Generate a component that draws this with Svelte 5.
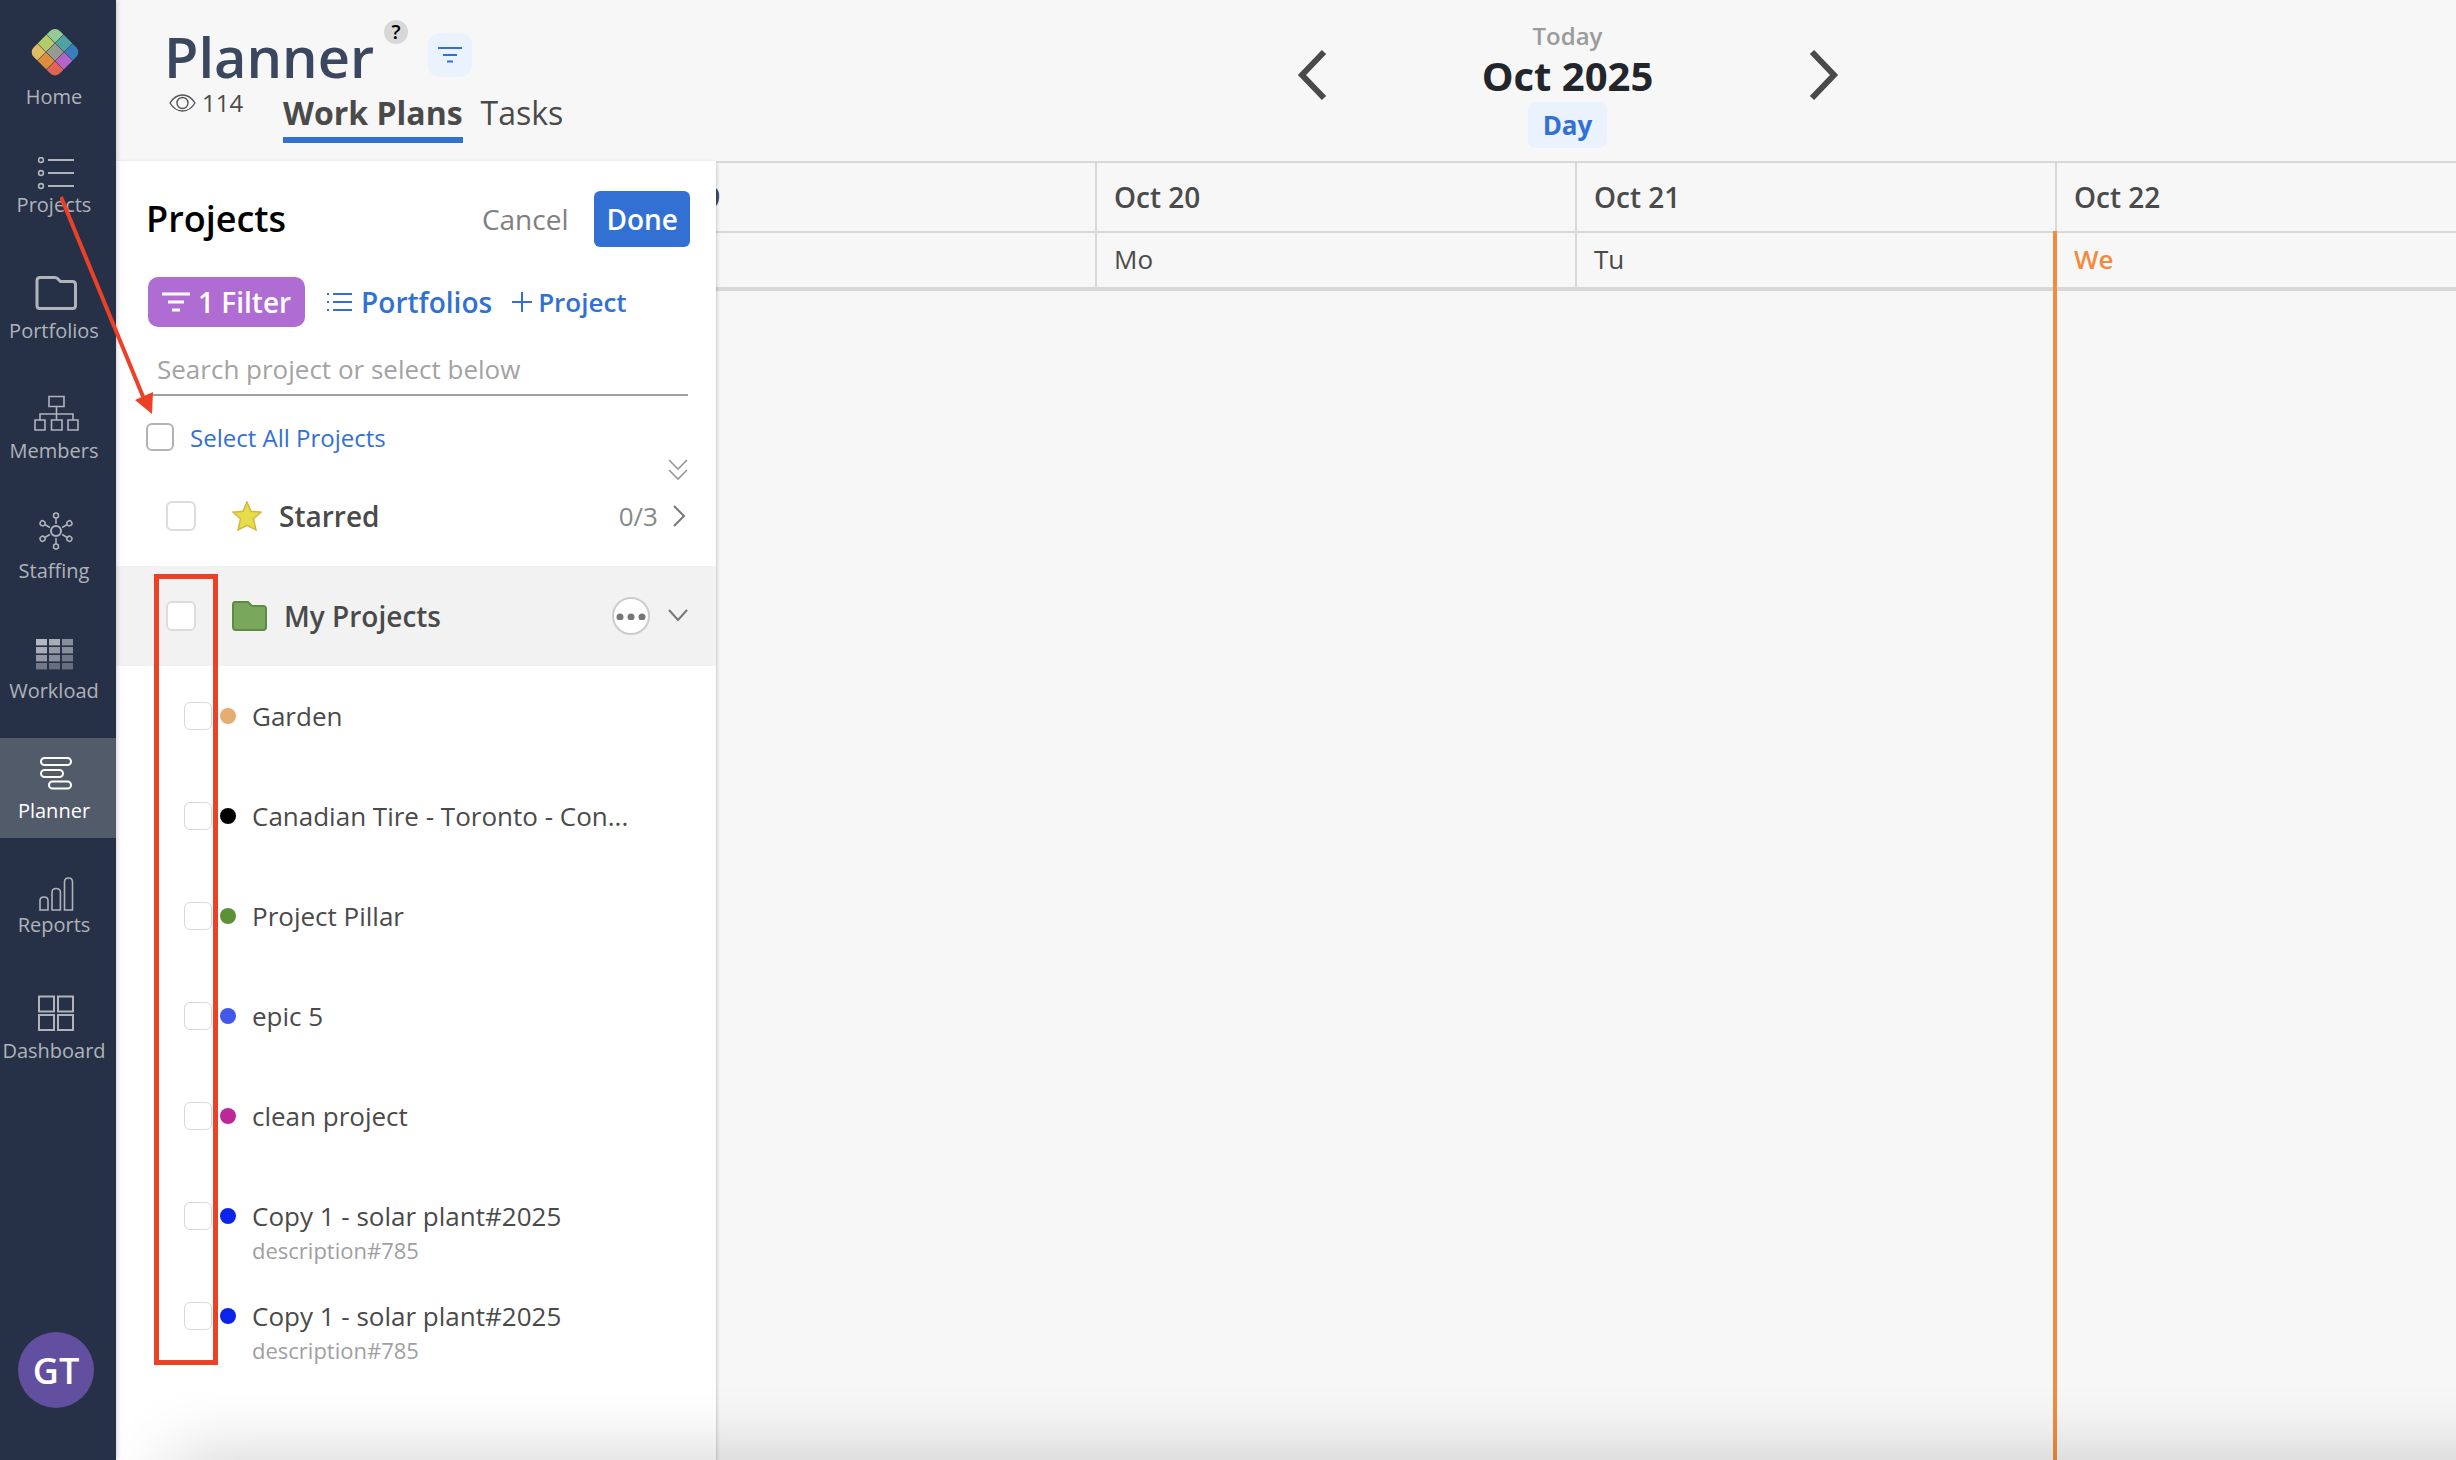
<script>
    const nav = [
        { name: "Home", height: 58 },
        { name: "Projects", height: 34 },
        { name: "Portfolios", height: 46 },
        { name: "Members", height: 46 },
        { name: "Staffing", height: 46 },
        { name: "Workload", height: 46 },
        { name: "Planner", height: 46 },
        { name: "Reports", height: 34 },
        { name: "Dashboard", height: 46 },
    ];
    const workload = [
        [0.65, 0.6, 0.45],
        [0.6, 0.5, 0.45],
        [0.5, 0.45, 0.35],
        [0.35, 0.3, 0.3],
    ];
    const logoColors = [
        ["#94cb97", "#4fa3a2", "#3a7dbd"],
        ["#b3cb69", "#979c90", "#b463c9"],
        ["#dfbd62", "#dd8d3c", "#e06455"],
    ];
    const projects = [
        { name: "Garden", color: "#e5ad70" },
        { name: "Canadian Tire - Toronto - Con...", color: "#000000" },
        { name: "Project Pillar", color: "#5d9138" },
        { name: "epic 5", color: "#4357ea" },
        { name: "clean project", color: "#b92a98" },
        {
            name: "Copy 1 - solar plant#2025",
            color: "#0b24ea",
            description: "description#785",
        },
        {
            name: "Copy 1 - solar plant#2025",
            color: "#0b24ea",
            description: "description#785",
        },
    ];
    const days = [
        { date: "Oct 19", weekday: "Su" },
        { date: "Oct 20", weekday: "Mo" },
        { date: "Oct 21", weekday: "Tu" },
        { date: "Oct 22", weekday: "We", today: true },
    ];

    let active = "Planner";
    let query = "";
</script>

<div class="app">
    <nav class="sidebar">
        {#each nav as item}
            <a href="#{item.name}" class:active={item.name === active}>
                <svg width="56" height={item.height} fill="none" stroke="currentColor" stroke-width="2">
                    {#if item.name === "Home"}
                        <clipPath id="logo"><rect x="10.6" y="8.6" width="37" height="37" rx="7" transform="rotate(45 29 27)" /></clipPath>
                        <g clip-path="url(#logo)" stroke="none">
                            {#each logoColors as row, r}
                                {#each row as color, c}
                                    <rect x={10 + c * 12.8} y={8 + r * 12.8} width="12.4" height="12.4" fill={color} transform="rotate(45 29 27)" />
                                {/each}
                            {/each}
                        </g>
                    {:else if item.name === "Projects"}
                        {#each [3, 16, 29] as y}
                            <circle cx="15" cy={y} r="2.4" stroke-width="1.6" />
                            <path d="M22 {y}h26" />
                        {/each}
                    {:else if item.name === "Portfolios"}
                        <path stroke-width="3" d="M14 6.500h15q2 0 3.500 2l2 2h12q3 0 3 3v21q0 3-3 3H14q-3 0-3-3v-25q0-3 3-3z" />
                    {:else if item.name === "Members"}
                        <path stroke-width="1.6" d="M23 5.500h15v10H23zM30.500 15.500v13M14 28.500v-5.500h33v5.500M9 29h10v10H9zM25.500 29h10.500v10H25.500zM42 29h10v10H42z" />
                    {:else if item.name === "Staffing"}
                        <circle cx="30" cy="20" r="5" />
                        {#each [0, 60, 120, 180, 240, 300] as angle}
                            <g transform="rotate({angle} 30 20)" stroke-width="1.5">
                                <path d="M30 13V7" />
                                <circle cx="30" cy="4.500" r="2.500" />
                            </g>
                        {/each}
                    {:else if item.name === "Workload"}
                        {#each workload as row, r}
                            {#each row as opacity, c}
                                <rect x={10 + c * 13} y={8 + r * 8} width="11" height="6.400" fill="#fff" fill-opacity={opacity} stroke="none" />
                            {/each}
                        {/each}
                    {:else if item.name === "Planner"}
                        <rect x="15" y="7" width="30" height="7" rx="3.500" />
                        <rect x="15" y="19" width="22" height="7" rx="3.500" />
                        <rect x="23" y="30.500" width="22" height="7" rx="3.500" />
                    {:else if item.name === "Reports"}
                        <path stroke-width="1.6" d="M14 33V23.500q0-3.500 4-3.500t4 3.500V33zM26 33V15.500q0-4 4.200-4t4.200 4V33zM38.500 33V5q0-4 4-4t4 4V33z" />
                    {:else}
                        <path d="M13 5.500h15v15H13zM32 5.500h15v15H32zM13 24h15v15H13zM32 24h15v15H32z" />
                    {/if}
                </svg>
                <span>{item.name}</span>
            </a>
        {/each}
        <button class="avatar">GT</button>
    </nav>

    <main>
        <header>
            <div class="title">
                <div class="title-row">
                    <h1>Planner</h1>
                    <button class="help" aria-label="Help">?</button>
                    <button class="filter-icon" aria-label="Filter">
                        <svg width="24" height="18" stroke="#3271d3" stroke-width="2">
                            <path d="M0 2h24M5 9h14M9 15.500h6" />
                        </svg>
                    </button>
                </div>
                <div class="tabs-row">
                    <span class="views">
                        <svg width="27" height="18" fill="none" stroke="#555" stroke-width="1.4">
                            <path d="M1 9Q6 1 13.500 1T26 9Q21 17 13.500 17T1 9z" />
                            <circle cx="13.500" cy="9" r="5.500" />
                        </svg>
                        114
                    </span>
                    <button class="tab selected">Work Plans</button>
                    <button class="tab">Tasks</button>
                </div>
            </div>
            <div class="period">
                <button class="arrow" aria-label="Previous">
                    <svg width="30" height="52" fill="none" stroke="#4a4a4a" stroke-width="6">
                        <path d="M27 3L5 26l22 23" />
                    </svg>
                </button>
                <div class="current">
                    <button class="today">Today</button>
                    <h2>Oct 2025</h2>
                    <button class="scale">Day</button>
                </div>
                <button class="arrow" aria-label="Next">
                    <svg width="30" height="52" fill="none" stroke="#4a4a4a" stroke-width="6">
                        <path d="M3 3l22 23L3 49" />
                    </svg>
                </button>
            </div>
        </header>

        <div class="content">
            <section class="panel">
                <div class="panel-head">
                    <h3>Projects</h3>
                    <button class="cancel">Cancel</button>
                    <button class="done">Done</button>
                </div>
                <div class="actions">
                    <button class="filter">
                        <svg width="28" height="20" stroke="#fff" stroke-width="3">
                            <path d="M0 2h28M6 10h16M10 18h8" />
                        </svg>
                        1 Filter
                    </button>
                    <button class="link portfolios">
                        <svg width="25" height="20" stroke="#3271d3" stroke-width="2">
                            <path d="M0 2h2M6 2h19M0 10h2M6 10h19M0 18h2M6 18h19" />
                        </svg>
                        Portfolios
                    </button>
                    <button class="link">
                        <svg width="20" height="20" stroke="#3271d3" stroke-width="2">
                            <path d="M0 10h20M10 0v20" />
                        </svg>
                        Project
                    </button>
                </div>
                <input class="search" type="text" aria-label="Search project" placeholder="Search project or select below" bind:value={query} />
                <label class="select-all">
                    <input type="checkbox" />
                    Select All Projects
                </label>
                <button class="expand" aria-label="Expand all">
                    <svg width="20" height="22" fill="none" stroke="#999" stroke-width="1.6">
                        <path d="M1 1l9 9 9-9M1 11l9 9 9-9" />
                    </svg>
                </button>

                <div class="group">
                    <input type="checkbox" id="starred" />
                    <svg width="30" height="30" fill="#e9dc4b" stroke="#d3b83f" stroke-width="1.5">
                        <path d="M15 1l4 9.300 10 .9-7.500 6.600L24 29l-9-4.600L6 29l2.500-11.200L1 11.200l10-.9z" />
                    </svg>
                    <label for="starred">Starred</label>
                    <span class="count">0/3</span>
                    <button class="chevron" aria-label="Open Starred">
                        <svg width="20" height="22" fill="none" stroke="#777" stroke-width="2">
                            <path d="M6 1l10 10L6 21" />
                        </svg>
                    </button>
                </div>
                <div class="group open">
                    <input type="checkbox" id="mine" />
                    <svg width="35" height="30" fill="#79a75c" stroke="#5f8a45" stroke-width="2">
                        <path d="M3 1h13l4 4h11q3 0 3 3v18q0 3-3 3H4q-3 0-3-3V4q0-3 2-3z" />
                    </svg>
                    <label for="mine">My Projects</label>
                    <button class="more" aria-label="More">
                        <svg width="30" height="8" fill="#777">
                            <circle cx="4" cy="5" r="3.500" />
                            <circle cx="15" cy="5" r="3.500" />
                            <circle cx="26" cy="5" r="3.500" />
                        </svg>
                    </button>
                    <button class="chevron" aria-label="Close My Projects">
                        <svg width="20" height="22" fill="none" stroke="#777" stroke-width="2">
                            <path d="M1 5l9 10 9-10" />
                        </svg>
                    </button>
                </div>

                {#each projects as project}
                    <label class="project">
                        <input type="checkbox" />
                        <span class="dot" style="background: {project.color}"></span>
                        <span class="text">
                            <span class="name">{project.name}</span>
                            {#if project.description}
                                <span class="description">{project.description}</span>
                            {/if}
                        </span>
                    </label>
                {/each}
            </section>

            <section class="timeline">
                {#each days as day}
                    <div class="day" class:now={day.today}>
                        <div class="date">{day.date}</div>
                        <div class="weekday">{day.weekday}</div>
                    </div>
                {/each}
            </section>
        </div>
        <div class="bottom-shadow"></div>
    </main>

    <svg class="arrow-mark" width="100" height="222">
        <path d="M1 1L84 203" stroke="#ed4127" stroke-width="4" />
        <path d="M75 204L93 196 92 218z" fill="#ed4127" />
    </svg>
    <div class="box-mark"></div>
</div>

<style>
    :global(body) {
        font-family: "Open Sans", "Noto Sans", sans-serif;
        color: #4a4a4a;
        background: #f7f7f7;
    }
    button {
        font-family: inherit;
        color: inherit;
        background: none;
        border: none;
        padding: 0;
        cursor: pointer;
    }
    svg {
        display: block;
        flex: none;
    }
    h1,
    h2,
    h3 {
        margin: 0;
    }
    .app {
        display: flex;
        min-height: 100vh;
        position: relative;
        overflow: hidden;
    }

    /* sidebar */
    .sidebar {
        width: 116px;
        flex: none;
        box-sizing: border-box;
        padding: 18px 0 52px;
        display: flex;
        flex-direction: column;
        gap: 20px;
        background: #263147;
        box-shadow: 0 0 6px rgba(0, 0, 0, 0.25);
        z-index: 2;
    }
    .sidebar a {
        height: 100px;
        box-sizing: border-box;
        padding-right: 8px;
        display: flex;
        flex-direction: column;
        align-items: center;
        justify-content: center;
        font-size: 20px;
        line-height: 28px;
        color: #b0b3ba;
        text-decoration: none;
    }
    .sidebar a.active {
        background: #525b69;
        color: #fff;
    }
    .avatar {
        width: 76px;
        height: 76px;
        margin: auto 0 0 18px;
        border-radius: 50%;
        background: #634fa0;
        color: #fff;
        font-size: 36px;
        font-weight: 600;
    }

    main {
        flex: 1;
        min-width: 0;
        display: flex;
        flex-direction: column;
        position: relative;
    }

    /* header */
    header {
        height: 161px;
        display: flex;
    }
    .title {
        width: 563px;
        flex: none;
        box-sizing: border-box;
        padding: 18px 0 0 48px;
    }
    .title-row {
        display: flex;
        align-items: flex-start;
        height: 74px;
    }
    h1 {
        font-size: 56px;
        line-height: 76px;
        font-weight: 600;
        color: #3b475e;
    }
    .help {
        width: 24px;
        height: 24px;
        margin: 2px 20px 0 10px;
        border-radius: 50%;
        background: #d8d8d8;
        color: #000;
        font-size: 20px;
        line-height: 24px;
        font-weight: 600;
    }
    .filter-icon {
        width: 44px;
        height: 44px;
        margin-top: 15px;
        display: flex;
        align-items: center;
        justify-content: center;
        border-radius: 12px;
        background: #eaf2fd;
    }
    .tabs-row {
        display: flex;
        align-items: flex-start;
    }
    .views {
        width: 114px;
        margin-left: 5px;
        line-height: 22px;
        font-size: 24px;
        display: flex;
        align-items: center;
        gap: 6px;
    }
    .tab {
        height: 51px;
        margin-right: 18px;
        padding-bottom: 6px;
        font-size: 32px;
        line-height: 42px;
        border-bottom: 6px solid transparent;
    }
    .tab.selected {
        font-weight: 700;
        border-color: #3271d3;
    }
    .period {
        flex: 1;
        display: flex;
        justify-content: center;
    }
    .arrow {
        align-self: flex-start;
        margin-top: 49px;
    }
    .current {
        width: 482px;
        padding-top: 20px;
        display: flex;
        flex-direction: column;
        align-items: center;
    }
    .today {
        font-size: 24px;
        line-height: 32px;
        font-weight: 600;
        color: #9b9b9b;
    }
    h2 {
        margin-bottom: 2px;
        font-size: 40px;
        line-height: 48px;
        font-weight: 700;
        color: #22262b;
    }
    .scale {
        height: 46px;
        padding: 0 15px;
        border-radius: 8px;
        background: #eaf2fd;
        color: #3271d3;
        font-size: 26px;
        font-weight: 700;
    }

    /* projects panel */
    .content {
        flex: 1;
        display: flex;
    }
    .panel {
        width: 600px;
        flex: none;
        background: #fff;
        box-shadow: 0 2px 4px rgba(0, 0, 0, 0.3);
        z-index: 1;
    }
    .panel-head {
        display: flex;
        align-items: center;
        padding: 30px 26px 0 30px;
    }
    h3 {
        flex: 1;
        font-size: 36px;
        line-height: 56px;
        font-weight: 600;
        color: #000;
    }
    .cancel {
        font-size: 28px;
        color: #808080;
    }
    .done {
        height: 56px;
        margin-left: 26px;
        padding: 0 12px;
        border-radius: 6px;
        background: #3271d3;
        color: #fff;
        font-size: 28px;
        font-weight: 600;
    }
    .actions {
        display: flex;
        align-items: center;
        padding: 30px 0 0 32px;
    }
    .filter {
        height: 50px;
        padding: 0 14px;
        display: flex;
        align-items: center;
        gap: 8px;
        border-radius: 10px;
        background: #af6cd3;
        color: #fff;
        font-size: 28px;
        font-weight: 600;
    }
    .link {
        display: flex;
        align-items: center;
        gap: 6px;
        color: #3271d3;
        font-size: 26px;
        font-weight: 600;
    }
    .portfolios {
        margin: 0 20px 0 22px;
        gap: 9px;
        font-size: 28px;
    }
    .search {
        display: block;
        width: 540px;
        height: 55px;
        box-sizing: border-box;
        margin: 14px 0 0 32px;
        padding: 2px 9px 0;
        border: none;
        border-bottom: 2px solid #a0a0a0;
        background: none;
        font-family: inherit;
        font-size: 26px;
    }
    .search::placeholder {
        color: #a3a3a3;
    }
    input[type="checkbox"] {
        appearance: none;
        flex: none;
        box-sizing: border-box;
        width: 28px;
        height: 28px;
        margin: 0;
        border: 2px solid #b3b3b3;
        border-radius: 6px;
        background: #fff;
    }
    .select-all {
        display: flex;
        align-items: center;
        gap: 16px;
        margin: 26px 0 0 30px;
        height: 30px;
        font-size: 24px;
        color: #3271d3;
    }
    .expand {
        display: block;
        margin: 7px 0 0 552px;
        height: 7px;
    }
    .group {
        height: 100px;
        box-sizing: border-box;
        padding: 0 28px 0 50px;
        display: flex;
        align-items: center;
        font-size: 28px;
        font-weight: 600;
    }
    .group.open {
        background: #f2f2f2;
    }
    .group input[type="checkbox"] {
        width: 30px;
        height: 30px;
        margin-right: 36px;
        border-color: #dcdcdc;
    }
    .group label {
        flex: 1;
        margin-left: 17px;
    }
    .count {
        font-size: 26px;
        font-weight: 400;
        color: #888;
    }
    .chevron {
        margin-left: 10px;
    }
    .more {
        width: 38px;
        height: 38px;
        margin-right: 8px;
        display: flex;
        align-items: center;
        justify-content: center;
        border: 2px solid #ccc;
        border-radius: 50%;
        background: #fff;
    }
    .project {
        height: 100px;
        box-sizing: border-box;
        padding: 32px 88px 0 68px;
        display: flex;
        align-items: flex-start;
    }
    .project input[type="checkbox"] {
        margin-top: 4px;
        border: 1px solid #d8d8d8;
    }
    .dot {
        width: 16px;
        height: 16px;
        flex: none;
        margin: 10px 16px 0 8px;
        border-radius: 50%;
    }
    .text {
        min-width: 0;
        display: flex;
        flex-direction: column;
    }
    .name {
        font-size: 26px;
        line-height: 36px;
        white-space: nowrap;
    }
    .description {
        font-size: 22px;
        line-height: 32px;
        color: #a0a0a0;
    }

    /* timeline, scrolled a little into its first day */
    .timeline {
        flex: 1;
        min-width: 0;
        display: flex;
        margin-left: -101px;
    }
    .day {
        width: 480px;
        flex: none;
        box-sizing: border-box;
        position: relative;
    }
    .date,
    .weekday {
        box-sizing: border-box;
        padding-left: 17px;
        border-left: 2px solid #d8d8d8;
    }
    .date {
        height: 70px;
        border-top: 2px solid #d8d8d8;
        font-size: 28px;
        line-height: 68px;
        font-weight: 600;
    }
    .weekday {
        height: 60px;
        border-top: 2px solid #d8d8d8;
        border-bottom: 4px solid #d8d8d8;
        font-size: 26px;
        line-height: 52px;
    }
    .now .weekday {
        color: #f08c3f;
        font-weight: 600;
    }
    .now::after {
        content: "";
        position: absolute;
        left: -2px;
        top: 70px;
        bottom: 0;
        width: 4px;
        background: #f08c3f;
    }
    .bottom-shadow {
        position: absolute;
        left: 56px;
        right: -80px;
        bottom: -80px;
        height: 80px;
        box-shadow: 0 0 76px rgba(0, 0, 0, 0.2);
        z-index: 1;
    }

    /* callouts over the page */
    .arrow-mark {
        position: absolute;
        left: 60px;
        top: 196px;
        z-index: 3;
        pointer-events: none;
    }
    .box-mark {
        position: absolute;
        left: 154px;
        top: 574px;
        width: 64px;
        height: 791px;
        box-sizing: border-box;
        border: 5px solid #ed4127;
        z-index: 3;
        pointer-events: none;
    }
</style>
